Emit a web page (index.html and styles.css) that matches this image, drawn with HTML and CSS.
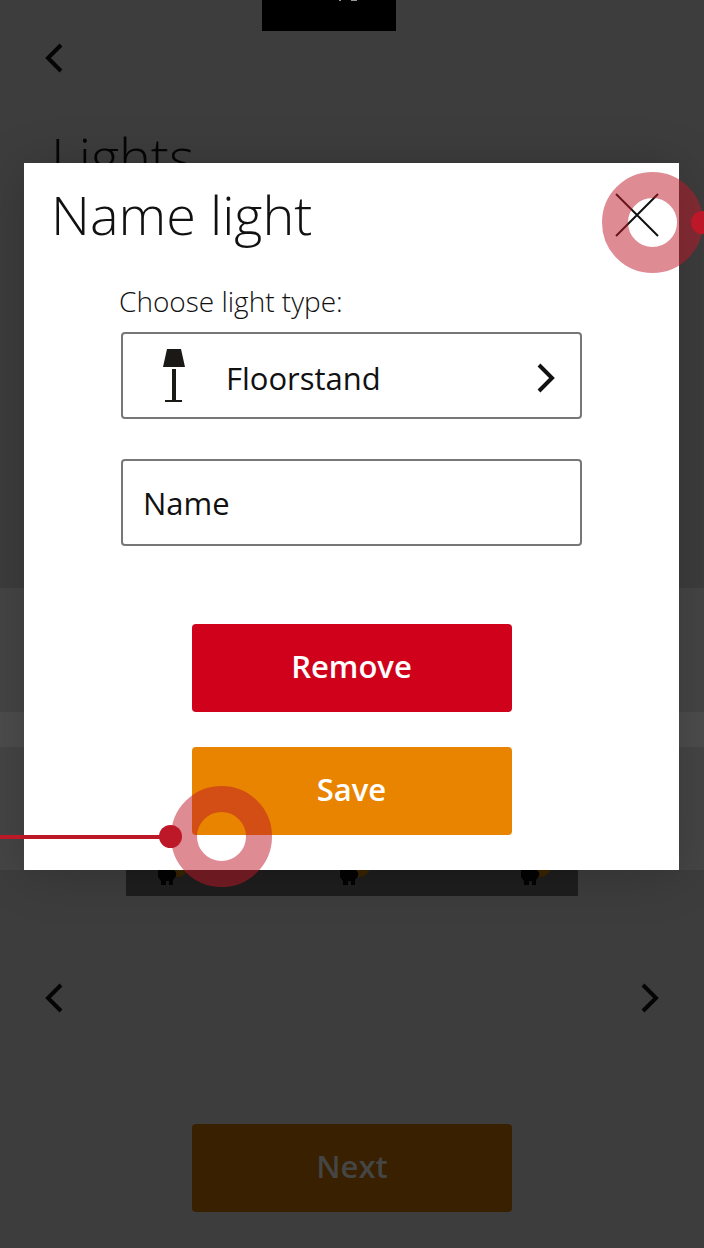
FILE: index.html
```html
<!DOCTYPE html>
<html lang="en">
<head>
<meta charset="utf-8">
<meta name="viewport" content="width=device-width, initial-scale=1">
<title>Name light</title>
<link rel="stylesheet" href="styles.css">
</head>
<body>
<div class="screen">
  <main class="page">
    <header class="page-head">
      <button class="icon-button" type="button" aria-label="Back">
        <svg class="chevron" viewBox="0 0 20 30"><path d="M17 2 4 15l13 13"/></svg>
      </button>
      <h1 class="page-title">Lights</h1>
    </header>
    <div class="band"></div>
    <div class="band band-light"></div>
    <div class="band band-tall"></div>
    <div class="strip">
      <svg class="bug" viewBox="0 0 30 20"><circle class="bulb" cx="20" cy="-4" r="11"/><path d="M1 0h16q3 2 2 6l-3 4v5h-4v-4H9v4H4v-4L1 7z"/></svg>
      <svg class="bug" viewBox="0 0 30 20"><circle class="bulb" cx="20" cy="-4" r="11"/><path d="M1 0h16q3 2 2 6l-3 4v5h-4v-4H9v4H4v-4L1 7z"/></svg>
      <svg class="bug" viewBox="0 0 30 20"><circle class="bulb" cx="20" cy="-4" r="11"/><path d="M1 0h16q3 2 2 6l-3 4v5h-4v-4H9v4H4v-4L1 7z"/></svg>
    </div>
    <nav class="pager">
      <button class="icon-button" type="button" aria-label="Previous">
        <svg class="chevron" viewBox="0 0 20 30"><path d="M17 2 4 15l13 13"/></svg>
      </button>
      <button class="icon-button" type="button" aria-label="Following">
        <svg class="chevron" viewBox="0 0 20 30"><path d="m3 2 13 13L3 28"/></svg>
      </button>
    </nav>
    <button class="button button-next" type="button">Next</button>
  </main>

  <div class="tab"><svg class="tab-mark" viewBox="0 0 24 2"><path d="M3 0h2M15 0h6"/></svg></div>

  <section class="dialog" role="dialog" aria-labelledby="dialog-title">
    <header class="dialog-head">
      <h2 class="dialog-title" id="dialog-title">Name light</h2>
      <button class="close" type="button" aria-label="Close">
        <svg class="cross" viewBox="0 0 46 46"><path d="m2 2 42 42M44 2 2 44"/></svg>
      </button>
    </header>
    <form class="form">
      <label class="label" for="type">Choose light type:</label>
      <button class="field picker" id="type" type="button">
        <svg class="lamp" viewBox="0 0 24 54"><path d="M5 0h14l4 18H1zM10 20h4v31h6v2H3v-2h7z"/></svg>
        <span class="picker-text">Floorstand</span>
        <svg class="chevron" viewBox="0 0 20 30"><path d="m3 2 13 13L3 28"/></svg>
      </button>
      <input class="field name" type="text" value="Name" aria-label="Name">
    </form>
    <div class="actions">
      <button class="button button-remove" type="button">Remove</button>
      <button class="button button-save" type="button">Save</button>
    </div>
  </section>

  <div class="ring ring-close"></div>
  <div class="dot dot-close"></div>
  <div class="ring ring-save"></div>
  <div class="line"></div>
  <div class="dot dot-save"></div>
</div>
</body>
</html>
```
FILE: styles.css
```css
* { box-sizing: border-box; }

body {
  margin: 0;
  background: #3d3d3d;
  color: #111;
  font-family: "Open Sans", "Noto Sans", sans-serif;
}

button, input { font: inherit; color: inherit; }

button {
  padding: 0;
  border: 0;
  background: none;
}

svg { display: block; flex: none; }

.screen {
  position: relative;
  min-height: 100vh;
  overflow: hidden;
}

/* dimmed page */
.page { display: flow-root; }

.page-head {
  height: 588px;
  padding: 43px 44px 0;
}

.chevron {
  width: 20px;
  height: 30px;
  fill: none;
  stroke: #111;
  stroke-width: 4;
}

.page .chevron { stroke: #050505; }

.page-title {
  margin: 42px 0 0 7px;
  font-size: 54px;
  font-weight: 300;
  line-height: 72px;
  color: #050505;
}

.band {
  height: 124px;
  background: #454545;
}

.band-light { height: 35px; background: #4d4d4d; }
.band-tall { height: 123px; }

.strip {
  display: flex;
  justify-content: space-between;
  height: 26px;
  margin: 0 126px;
  padding: 0 28px 0 31px;
  background: #1e1e1e;
}

.bug {
  width: 30px;
  height: 20px;
  fill: #030303;
}

.bulb { fill: #3a2400; }

.pager {
  display: flex;
  justify-content: space-between;
  margin: 87px 44px 0;
}

.button {
  display: block;
  width: 320px;
  max-width: 100%;
  height: 88px;
  margin: 0 auto;
  padding-bottom: 4px;
  border-radius: 4px;
  font-size: 31px;
  font-weight: 600;
  color: #fff;
}

.button-next {
  margin-top: 111px;
  background: #382000;
  color: #454545;
}

.button-remove { background: #d0021b; }
.button-save { background: #e98400; }

.tab {
  position: absolute;
  top: 0;
  left: 262px;
  width: 134px;
  height: 31px;
  background: #000;
}

.tab-mark {
  width: 24px;
  height: 2px;
  margin-left: 74px;
  stroke: #999;
  stroke-width: 2;
}

/* dialog */
.dialog {
  position: absolute;
  top: 163px;
  left: 24px;
  right: 25px;
  padding-bottom: 35px;
  background: #fff;
  box-shadow: 0 4px 48px rgba(0, 0, 0, 0.2);
}

.dialog-head {
  display: flex;
  justify-content: space-between;
  padding: 16px 19px 0 27px;
}

.dialog-title {
  margin: 0;
  font-size: 54px;
  font-weight: 300;
  line-height: 70px;
}

.close { height: 72px; }

.cross {
  width: 46px;
  height: 46px;
  fill: none;
  stroke: #111;
  stroke-width: 2;
}

.form {
  display: flex;
  flex-direction: column;
  padding: 30px 97px 0;
}

.label {
  margin-left: -2px;
  font-size: 28px;
  font-weight: 300;
  line-height: 40px;
}

.field {
  height: 87px;
  border: 2px solid #777;
  border-radius: 4px;
  background: #fff;
  font-size: 31px;
}

.picker {
  display: flex;
  align-items: center;
  margin-top: 11px;
  padding: 4px 24px 0 39px;
}

.picker-text {
  flex: 1;
  margin-left: 40px;
  text-align: left;
}

.lamp {
  width: 24px;
  height: 54px;
  margin-bottom: 4px;
  fill: #1a1916;
}

.name {
  width: 100%;
  margin-top: 40px;
  padding: 0 20px;
}

.actions {
  display: flex;
  flex-direction: column;
  gap: 35px;
  padding-top: 78px;
}

/* callouts */
.ring {
  position: absolute;
  width: 101px;
  height: 101px;
  border: 26px solid rgba(189, 24, 39, 0.5);
  border-radius: 50%;
  pointer-events: none;
}

.ring-close { top: 172px; right: 1px; }
.ring-save { top: 786px; left: 171px; }

.dot {
  position: absolute;
  width: 23px;
  height: 23px;
  border-radius: 50%;
  background: #bd1827;
}

.dot-close { top: 211px; right: -10px; }
.dot-save { top: 825px; left: 159px; }

.line {
  position: absolute;
  top: 835px;
  left: 0;
  width: 171px;
  height: 4px;
  background: #bd1827;
}
```
